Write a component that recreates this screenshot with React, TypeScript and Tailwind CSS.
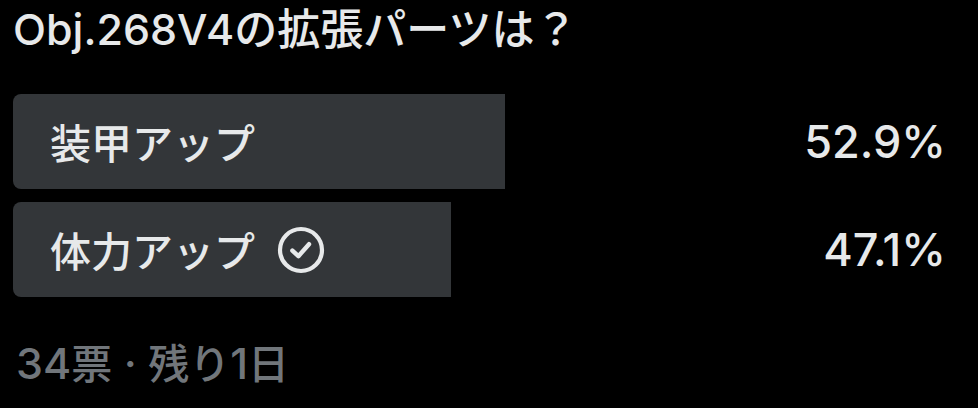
import React from 'react';

interface PollOption {
    label: string;
    percent: number;
    voted?: boolean;
}

const options: PollOption[] = [
    { label: '装甲アップ', percent: 52.9 },
    { label: '体力アップ', percent: 47.1, voted: true },
];

const CheckCircle: React.FC = () => (
    <svg viewBox="0 0 24 24" className="w-[48px] h-[48px] shrink-0" fill="none" stroke="currentColor">
        <circle cx="12" cy="12" r="10.5" strokeWidth="2.1" />
        <path d="M7.7 12.3l3 2.8 5.3-6" strokeWidth="2.2" strokeLinecap="round" strokeLinejoin="round" />
    </svg>
);

export default function App() {
    return (
        <div className="w-[978px] h-[408px] bg-black text-[#e7e9ea] pl-[13px] pr-[35px] overflow-hidden font-medium">
            {/* QUESTION */}
            <p className="leading-[52px] whitespace-nowrap">
                <span className="text-[43px] font-['Inter','Noto_Sans_CJK_JP',sans-serif]">Obj.268V4</span>
                <span className="text-[43px] font-['Noto_Sans_CJK_JP',sans-serif]">の拡張パーツは？</span>
            </p>

            {/* OPTIONS */}
            <div className="mt-[29px] flex flex-col gap-[13px]">
                {options.map((opt) => (
                    <div key={opt.label} className="relative h-[95px] flex items-center justify-between">
                        <div
                            className="absolute inset-y-0 left-0 bg-[#333639] rounded-l-lg"
                            style={{ width: `${opt.percent}%` }}
                        />
                        <div className="relative flex items-center gap-[22px] pl-[37px] leading-none">
                            <span className="text-[41px] font-['Noto_Sans_CJK_JP',sans-serif]">{opt.label}</span>
                            {opt.voted && <CheckCircle />}
                        </div>
                        <span className="relative -mr-[3px] text-[45px] leading-none font-['Inter','Noto_Sans_CJK_JP',sans-serif]">
                            {opt.percent.toFixed(1)}%
                        </span>
                    </div>
                ))}
            </div>

            {/* FOOTER */}
            <p className="mt-[38px] pl-[3px] leading-[52px] text-[#71767b] whitespace-nowrap">
                <span className="text-[43px] font-['Inter',sans-serif]">34</span>
                <span className="text-[41px] font-['Noto_Sans_CJK_JP',sans-serif]">票</span>
                <span className="text-[43px] font-['Inter',sans-serif]"> · </span>
                <span className="text-[41px] font-['Noto_Sans_CJK_JP',sans-serif]">残り</span>
                <span className="text-[43px] font-['Inter',sans-serif]">1</span>
                <span className="text-[41px] font-['Noto_Sans_CJK_JP',sans-serif]">日</span>
            </p>
        </div>
    );
}
